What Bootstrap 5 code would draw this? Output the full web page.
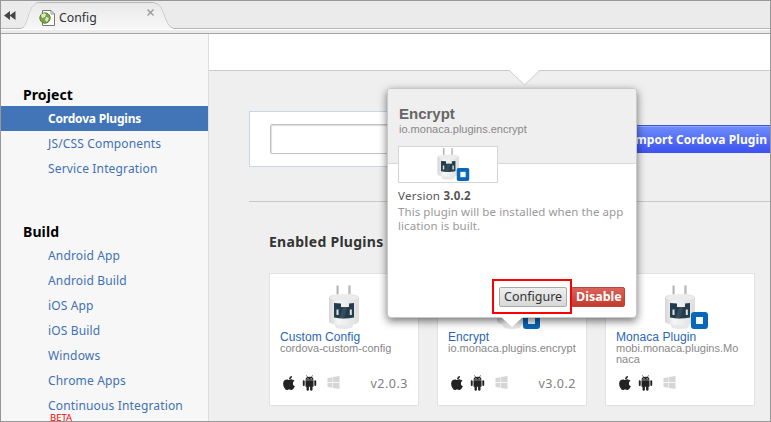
<!DOCTYPE html>
<html lang="en">
<head>
<meta charset="utf-8">
<title>Config</title>
<link href="https://cdn.jsdelivr.net/npm/bootstrap@5.3.0/dist/css/bootstrap.min.css" rel="stylesheet">
<style>
body{font-family:"Noto Sans","Open Sans",sans-serif;font-size:12px;line-height:16px;color:#333;background:#efefef}
.frame{width:771px;height:422px;border:1px solid #979797}
.tabbar{height:33px;background:#ebebeb;border-bottom:1px solid #a5a5a5}
.tabbar>svg{display:block}
.tab-title{left:58px;top:9px;font-size:12.3px;color:#333}
.side{width:208px;background:#f7f7f7;border-right:1px solid #ddd;padding-top:50px}
.side h2{font-size:14px;font-weight:700;line-height:22px;margin:0;padding-left:22px;color:#000;letter-spacing:.1px}
.side .nav-link{padding:0 0 0 47px;height:25px;line-height:25px;color:#4271b5;font-size:12px;letter-spacing:.15px;white-space:nowrap}
.side .nav-link.active{background:#4175b7;color:#fff;font-weight:700;letter-spacing:-.2px}
.side .build{margin-top:40px}
.beta{color:#f00;font-size:9.5px;line-height:10px;margin:-5px 0 0 49px}
.topband{height:37px;background:#fff;border-bottom:1px solid #c9c9c9}
.band-arrow{left:300px;top:36px}
.search{margin:40px 0 0 40px;height:56px}
.search-box{width:300px;border:1px solid #c8d6e6;background:#fff;padding:12px 20px}
.search-box .form-control{height:30px;border:1px solid #c2c2c2;border-radius:2px;box-shadow:inset 1px 1px 1px #ddd}
.import{margin:14px 0 0 60px;height:28px;width:162px;border:0;border-top:1px solid #3c55d8;border-radius:0;background:linear-gradient(#6f8dfb,#3b50ef);box-shadow:inset 0 1px #8ea5ff;color:#fff;font-weight:700;font-size:12px;letter-spacing:.07px;padding:0 4px 0 0;text-align:right;white-space:nowrap}
.rule{margin:34px 0 0 40px;height:1px;background:#c8c8c8}
.main h3{font-size:14px;font-weight:700;line-height:20px;margin:30px 0 0 60px;color:#333;letter-spacing:.28px}
.cards{margin:21px 0 0 60px;gap:18px}
.plugin{width:150px;height:133px;background:#fff;border:1px solid #e2e2e2;padding:10px 10px 0;font-family:"Liberation Sans",Arial,sans-serif}
.plugin .pic{height:46px}
.plugin .pname{font-size:12px;line-height:12px;margin-top:1px;color:#2a66b3;letter-spacing:.06px}
.plugin .pid{font-size:11px;line-height:11px;color:#888;height:25px;word-break:break-all}
.plugin .os{height:17px;margin-top:6px;padding-left:2px;gap:6px}
.ver{font-family:"Noto Sans",sans-serif;font-size:12.5px;color:#808080;letter-spacing:.5px;padding-top:3px}
.pop{left:386px;top:87px;width:250px;height:230px;background:#fff;border:1px solid #c9c9c9;border-radius:4px;box-shadow:0 3px 8px rgba(0,0,0,.55)}
.pop-head{height:75px;background:#efefef;border-bottom:1px solid #d9d9d9;border-radius:3px 3px 0 0;padding:16px 11px 0;font-family:"Liberation Sans",Arial,sans-serif}
.pop-head b{display:block;font-size:15px;line-height:18px;color:#666}
.pop-head span{display:block;font-size:11px;line-height:13px;color:#888}
.pop-pic{width:100px;height:37px;margin:-18px 0 0 10px;border:1px solid #d6d6d6;background:#fff;position:relative}
.pop-pic svg{margin-left:12px}
.pop-body{padding:4px 10px 0;color:#999;line-height:14px;font-size:11.5px;letter-spacing:.07px}
.pop-body .vers{color:#555;line-height:18px;letter-spacing:.25px}
.pop-arrow{left:113px;top:228px}
.actions{right:11px;bottom:10px}
.actions .btn{height:20px;padding:0 4px;font-size:12.5px;line-height:18px;border-radius:2px}
.cfg{width:68px;border:1px solid #aaa;background:linear-gradient(#eee,#d8d8d8);color:#333}
.dis{width:54px;border:1px solid #b8463c;background:linear-gradient(#d9635b,#c33c2c);color:#fff;font-weight:700;margin-left:4px}
.redbox{left:104px;top:190px;width:80px;height:35px;border:2px solid #f00}
</style>
<script src="https://cdn.jsdelivr.net/npm/bootstrap@5.3.0/dist/js/bootstrap.bundle.min.js"></script>
</head>
<body>
<svg width="0" height="0" class="position-absolute">
<defs>
<linearGradient id="shell" x2="1"><stop offset="0" stop-color="#d5d5d5"/><stop offset=".3" stop-color="#f6f6f6"/><stop offset="1" stop-color="#dedede"/></linearGradient>
<symbol id="plug" viewBox="0 0 50 48">
<path d="M10.700 14V1.500M22.500 14V1.500" stroke="#aaa" stroke-width="2.200"/><path d="M11.400 13V1.500M23.100 13V1.500" stroke="#ddd" stroke-width=".8"/>
<path d="M7 39h20l-2 5q-8 2-16 0z" fill="#e8e8e8"/>
<path d="M2 14Q2 10 17 10T32 14V37Q32 41 17 41T2 37Z" fill="url(#shell)"/>
<ellipse cx="17" cy="13.500" rx="14" ry="3" fill="#ececec"/>
<path d="M7 19l7 .6V23h8v-3.400l5-.6v14.500q-10 2-20 0z" fill="#253c4c"/><path d="M12.500 34l3.500-11h4l-3 11.300z" fill="#344e5f"/><path d="M9.500 25.500h2v5.500h-2zM22.800 25.500h2v5.500h-2z" fill="#dfe4e7"/>
</symbol>
<symbol id="badge-m" viewBox="0 0 17 17"><rect width="17" height="17" rx="3" fill="#0867b8"/><rect x="5" y="5" width="7" height="7" fill="#f3f8fc"/></symbol>
<symbol id="apple" viewBox="0 0 384 512"><path fill="#222" d="M319 269c0-37 17-64 50-84-19-27-47-42-84-45-35-3-74 21-88 21-15 0-49-20-76-20C65 142 4 186 4 275c0 27 5 54 14 82 13 36 58 126 106 125 25-1 43-18 75-18 32 0 48 18 76 18 48-1 90-82 102-119-65-31-58-90-58-94zM262 105c27-32 25-62 24-73-24 1-52 16-68 35-17 20-28 44-25 71 26 2 50-11 69-33z"/></symbol>
<symbol id="droid" viewBox="0 0 14 16"><path fill="#222" d="M3 5.300h8v6.500H3zM3 4.800Q3 2 7 1.800t4 3zM.3 6Q.3 5.200 1.200 5.200T2.200 6v4q0 1-.9 1t-1-1zM11.800 6q0-.8 1-.8t.9.8v4q0 1-.9 1t-1-1zM4 11h2.400v3.800q0 1-1.200 1T4 14.800zM7.600 11H10v3.800q0 1-1.200 1t-1.200-1z"/><path d="M4 .4l1.200 2M10 .4l-1.200 2" stroke="#222" stroke-width=".7"/><path d="M5 3.500h.9M8.200 3.500h.9" stroke="#fff" stroke-width=".8"/></symbol>
<symbol id="win" viewBox="0 0 12 13"><path fill="#d6d6d6" d="M0 2l5-.8V6H0zM5.600 1.100L12 0v6H5.600zM0 6.700h5v5L0 11zM5.600 6.700H12V13l-6.400-1.100z"/></symbol>
</defs></svg>
<div class="frame position-relative overflow-hidden d-flex flex-column">
 <header class="tabbar position-relative flex-shrink-0">
  <svg width="769" height="32" viewBox="1 1 769 32">
   <defs><linearGradient id="tab" x2="0" y2="1"><stop offset="0" stop-color="#e9e9e9"/><stop offset="1" stop-color="#f7f7f7"/></linearGradient></defs>
   <path d="M0 29.500h771" stroke="#fff"/><path d="M0 28.500h21C28 28 28 10 34 5Q36 2.500 40 2.500H151Q158 2.500 161 8C165 16 167 28 174 28.500H771" fill="none" stroke="#b5b5b5"/>
   <path d="M21 29C28 28 28 10 34 5Q36 3 40 3H151Q158 3 161 8C165 16 167 28 174 29z" fill="url(#tab)"/>
   <path d="M10 11v9l-6-4.500zM15.500 11v9l-6-4.500z" fill="#444"/>
   <path d="M42.500 10.500h8.500l3.500 3.500v11.500h-12z" fill="#fff" stroke="#777"/><path d="M51 10.500v3.500h3.500" fill="none" stroke="#999"/>
   <circle cx="45" cy="18" r="5.200" fill="#7ba34c" stroke="#56812d"/><path d="M41 15q3-3 5-1l-1 3-3 1zM46 17l3 1-2 4-2-2z" fill="#dcebc8"/>
   <path d="M147.500 9.500l6 6M153.500 9.500l-6 6" stroke="#999" stroke-width="1.400"/>
  </svg>
  <span class="tab-title position-absolute">Config</span>
 </header>
 <div class="d-flex flex-grow-1 overflow-hidden">
  <nav class="side flex-shrink-0">
   <h2>Project</h2>
   <div class="nav flex-column flex-nowrap"><a class="nav-link active" href="#">Cordova Plugins</a><a class="nav-link" href="#">JS/CSS Components</a><a class="nav-link" href="#">Service Integration</a></div>
   <h2 class="build">Build</h2>
   <div class="nav flex-column flex-nowrap"><a class="nav-link" href="#">Android App</a><a class="nav-link" href="#">Android Build</a><a class="nav-link" href="#">iOS App</a><a class="nav-link" href="#">iOS Build</a><a class="nav-link" href="#">Windows</a><a class="nav-link" href="#">Chrome Apps</a><a class="nav-link" href="#">Continuous Integration</a></div>
   <div class="beta">BETA</div>
  </nav>
  <main class="main position-relative flex-grow-1">
   <div class="topband"></div>
   <svg class="band-arrow position-absolute" width="32" height="17"><path d="M0 0L15.500 15L31 0" fill="#fff" stroke="#ccc"/></svg>
   <div class="search d-flex"><div class="search-box"><input class="form-control" aria-label="Plugin"></div><button class="import">Import Cordova Plugin</button></div>
   <div class="rule"></div>
   <h3>Enabled Plugins</h3>
   <div class="cards d-flex">
    <article class="plugin"><div class="pic d-flex justify-content-center"><svg width="50" height="48" class="ms-3"><use href="#plug"/></svg></div><div class="pname">Custom Config</div><div class="pid">cordova-custom-config</div><div class="os d-flex align-items-center"><svg width="14" height="16"><use href="#apple"/></svg><svg width="15" height="16"><use href="#droid"/></svg><svg width="13" height="13" class="ms-1"><use href="#win"/></svg><span class="ver ms-auto">v2.0.3</span></div></article>
    <article class="plugin"><div class="pic d-flex justify-content-center"><svg width="50" height="48" class="ms-3"><use href="#plug"/><use href="#badge-m" x="28" y="28" width="17" height="17"/></svg></div><div class="pname">Encrypt</div><div class="pid">io.monaca.plugins.encrypt</div><div class="os d-flex align-items-center"><svg width="14" height="16"><use href="#apple"/></svg><svg width="15" height="16"><use href="#droid"/></svg><svg width="13" height="13" class="ms-1"><use href="#win"/></svg><span class="ver ms-auto">v3.0.2</span></div></article>
    <article class="plugin"><div class="pic d-flex justify-content-center"><svg width="50" height="48" class="ms-3"><use href="#plug"/><use href="#badge-m" x="28" y="28" width="17" height="17"/></svg></div><div class="pname">Monaca Plugin</div><div class="pid">mobi.monaca.plugins.Monaca</div><div class="os d-flex align-items-center"><svg width="14" height="16"><use href="#apple"/></svg><svg width="15" height="16"><use href="#droid"/></svg><svg width="13" height="13" class="ms-1"><use href="#win"/></svg></div></article>
   </div>
  </main>
 </div>
 <section class="pop position-absolute">
  <div class="pop-head"><b>Encrypt</b><span>io.monaca.plugins.encrypt</span></div>
  <div class="pop-pic d-flex justify-content-center"><svg width="36" height="35"><use href="#plug"/><use href="#badge-m" x="20.500" y="21" width="13" height="13"/></svg></div>
  <div class="pop-body"><div class="vers">Version <b>3.0.2</b></div>This plugin will be installed when the app<br>lication is built.</div>
  <div class="actions position-absolute d-flex"><button class="btn cfg">Configure</button><button class="btn dis">Disable</button></div>
  <div class="redbox position-absolute"></div>
  <svg class="pop-arrow position-absolute" width="22" height="12"><path d="M0 0L11 10L22 0z" fill="#fff"/></svg>
 </section>
</div>
</body>
</html>
